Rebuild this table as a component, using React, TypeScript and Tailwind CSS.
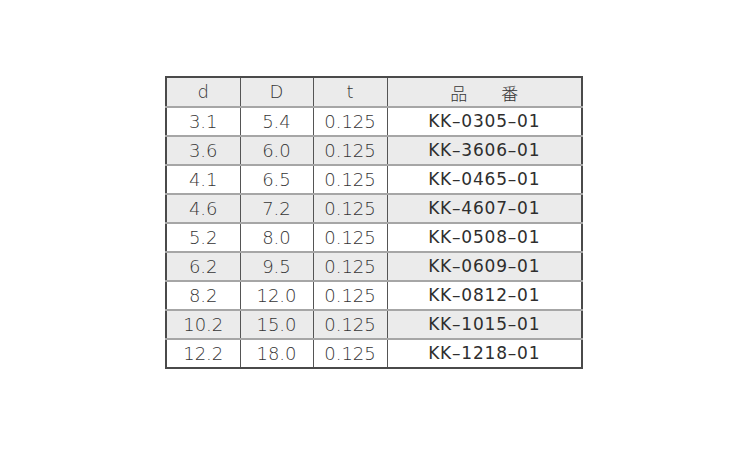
import React from "react";

const rows = [
  ["3.1", "5.4", "0.125", "KK–0305–01"],
  ["3.6", "6.0", "0.125", "KK–3606–01"],
  ["4.1", "6.5", "0.125", "KK–0465–01"],
  ["4.6", "7.2", "0.125", "KK–4607–01"],
  ["5.2", "8.0", "0.125", "KK–0508–01"],
  ["6.2", "9.5", "0.125", "KK–0609–01"],
  ["8.2", "12.0", "0.125", "KK–0812–01"],
  ["10.2", "15.0", "0.125", "KK–1015–01"],
  ["12.2", "18.0", "0.125", "KK–1218–01"],
];

export default function App() {
  return (
    <div className="w-[750px] h-[450px] bg-white pt-[76px] pl-[165px]" style={{ fontFamily: '"DejaVu Sans", "Noto Sans CJK JP", sans-serif' }}>
      <table className="border-collapse border-2 border-[#4a4a4a] text-[18px] text-[#353535] font-extralight" style={{ width: 418 }}>
        <thead>
          <tr className="bg-[#ebebeb] h-[30px] border-b-2 border-[#a6a6a6]">
            <th className="w-[74px] font-extralight p-0 leading-none border-r border-[#555]">d</th>
            <th className="w-[73px] font-extralight p-0 leading-none border-r border-[#555]">D</th>
            <th className="w-[74px] font-extralight p-0 leading-none border-r border-[#555]">t</th>
            <th className="font-light p-0 leading-none text-[17px]" style={{ fontFamily: '"Noto Sans CJK JP", sans-serif' }}>品　　番</th>
          </tr>
        </thead>
        <tbody>
          {rows.map((r, i) => (
            <tr key={i} className={(i % 2 === 1 ? "bg-[#ebebeb]" : "bg-white") + " h-[29px] border-b-2 border-[#a6a6a6] last:border-b-0"}>
              <td className="text-center p-0 leading-none border-r border-[#555]">{r[0]}</td>
              <td className="text-center p-0 leading-none border-r border-[#555]">{r[1]}</td>
              <td className="text-center p-0 leading-none border-r border-[#555]">{r[2]}</td>
              <td className="text-center p-0 leading-none font-normal text-[17px] tracking-[0.8px] text-[#2e2e2e]">{r[3]}</td>
            </tr>
          ))}
        </tbody>
      </table>
    </div>
  );
}
